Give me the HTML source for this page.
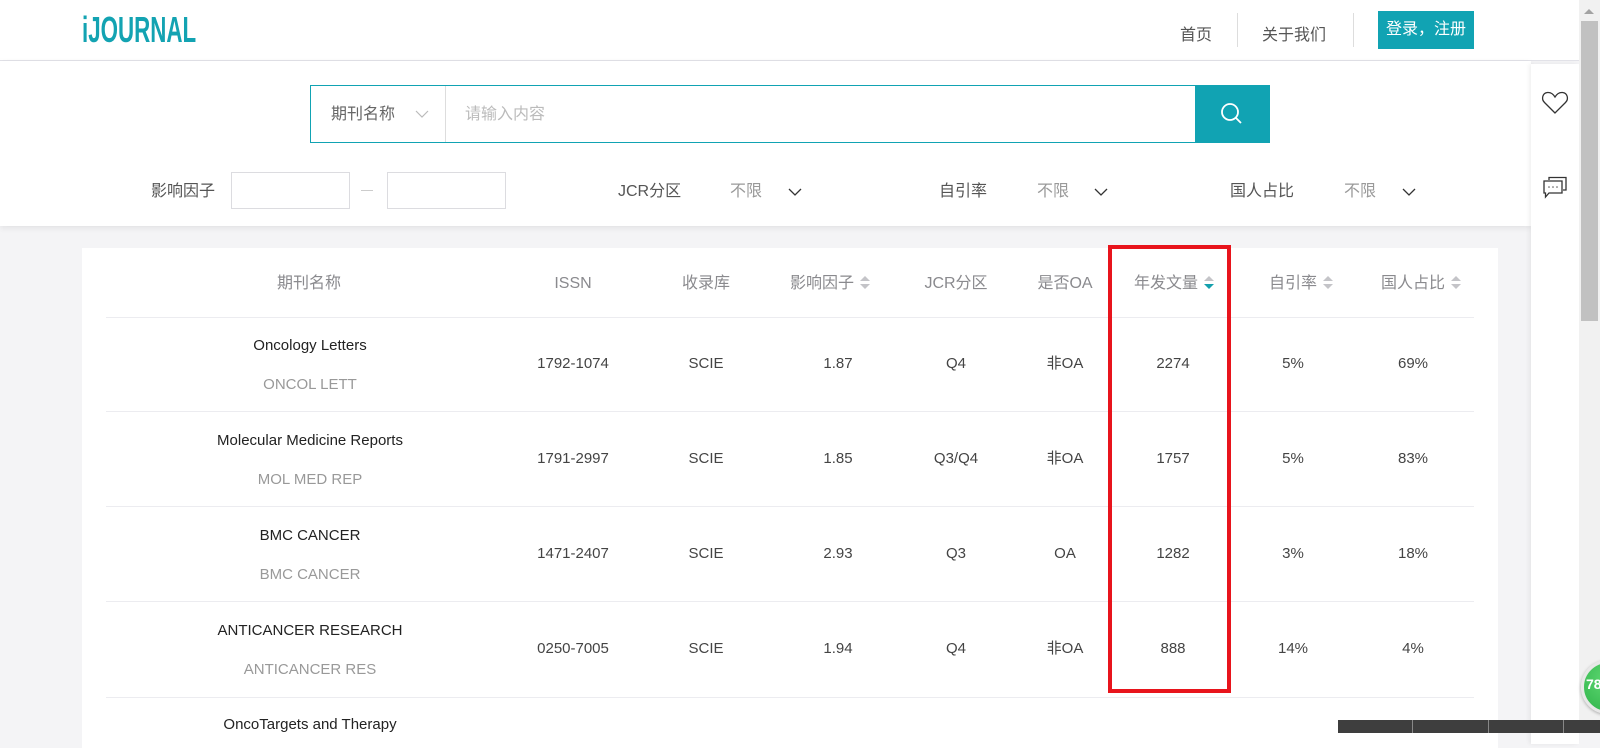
<!DOCTYPE html>
<html><head><meta charset="utf-8">
<style>
*{margin:0;padding:0;box-sizing:border-box}
body{width:1600px;height:733px;overflow:hidden;background:#f4f4f6;font-family:"Liberation Sans","Noto Sans CJK SC",sans-serif;position:relative}
.a{position:absolute;white-space:nowrap}
.c{transform:translateX(-50%)}
.hd{position:absolute;left:0;top:0;width:1579px;height:61px;background:#fff;border-bottom:1px solid #e2e2e8}
.sp{position:absolute;left:0;top:61px;width:1531px;height:165px;background:#fff;box-shadow:0 2px 6px rgba(0,0,0,.08)}
.card{position:absolute;left:82px;top:248px;width:1416px;height:500px;background:#fff}
.th{color:#8a8a8e;font-size:16px;top:274px;line-height:20px}
.td{color:#444;font-size:15px;line-height:18px}
.line{position:absolute;left:106px;width:1368px;height:1px;background:#ececf0}
.arr{display:inline-block;vertical-align:middle;margin-left:6px;width:10px;height:14px;position:relative;top:-1px}
.arr:before{content:"";position:absolute;left:0;top:0;border:5px solid transparent;border-bottom:5px solid #c4c4c8;border-top:0}
.arr:after{content:"";position:absolute;left:0;top:8px;border:5px solid transparent;border-top:5px solid #c4c4c8;border-bottom:0}
.arr.on:after{border-top-color:#14a0ad}
.f{color:#555;font-size:16px;top:182px;line-height:20px}
.g{color:#999;font-size:16px;top:182px;line-height:20px}
</style></head><body>
<div class="hd"></div>
<div class="a" style="left:82px;top:10px;font-size:36px;line-height:40px;color:#13a3b2;font-weight:bold;transform:scaleX(0.62);transform-origin:left">iJOURNAL</div>
<div class="a c" style="left:1196px;top:21px;font-size:16px;color:#555">首页</div>
<div class="a" style="left:1237px;top:13px;width:1px;height:34px;background:#ddd"></div>
<div class="a c" style="left:1294px;top:21px;font-size:16px;color:#555">关于我们</div>
<div class="a" style="left:1353px;top:13px;width:1px;height:34px;background:#ddd"></div>
<div class="a" style="left:1378px;top:11px;width:96px;height:38px;background:#11a3b3;color:#fff;font-size:16px;line-height:38px;text-align:center">登录，注册</div>

<div class="sp"></div>
<div class="a" style="left:310px;top:85px;width:960px;height:58px;border:1px solid #11a3b3;background:#fff"></div>
<div class="a" style="left:331px;top:105px;font-size:16px;line-height:20px;color:#666">期刊名称</div>
<svg class="a" style="left:415px;top:109px" width="14" height="10"><path d="M1 2 L7 8 L13 2" fill="none" stroke="#bbb" stroke-width="1.2"/></svg>
<div class="a" style="left:445px;top:86px;width:1px;height:56px;background:#ddd"></div>
<div class="a" style="left:465px;top:105px;font-size:16px;line-height:20px;color:#bbb">请输入内容</div>
<div class="a" style="left:1195px;top:86px;width:74px;height:56px;background:#11a3b3"></div>
<svg class="a" style="left:1218px;top:100px" width="28" height="28"><circle cx="12" cy="12" r="8" fill="none" stroke="#fff" stroke-width="1.8"/><path d="M18 18 L23 23" stroke="#fff" stroke-width="1.8"/></svg>

<div class="a f" style="left:151px">影响因子</div>
<div class="a" style="left:231px;top:172px;width:119px;height:37px;border:1px solid #dcdce0"></div>
<div class="a" style="left:361px;top:190px;width:12px;height:1px;background:#ccc"></div>
<div class="a" style="left:387px;top:172px;width:119px;height:37px;border:1px solid #dcdce0"></div>
<div class="a f" style="left:618px">JCR分区</div>
<div class="a g" style="left:730px">不限</div>
<svg class="a" style="left:788px;top:187px" width="14" height="10"><path d="M1 2 L7 8 L13 2" fill="none" stroke="#333" stroke-width="1.3"/></svg>
<div class="a f" style="left:939px">自引率</div>
<div class="a g" style="left:1037px">不限</div>
<svg class="a" style="left:1094px;top:187px" width="14" height="10"><path d="M1 2 L7 8 L13 2" fill="none" stroke="#333" stroke-width="1.3"/></svg>
<div class="a f" style="left:1230px">国人占比</div>
<div class="a g" style="left:1344px">不限</div>
<svg class="a" style="left:1402px;top:187px" width="14" height="10"><path d="M1 2 L7 8 L13 2" fill="none" stroke="#333" stroke-width="1.3"/></svg>

<div class="card"></div>
<div class="a c th" style="left:309px">期刊名称</div>
<div class="a c th" style="left:573px">ISSN</div>
<div class="a c th" style="left:706px">收录库</div>
<div class="a c th" style="left:830px">影响因子<span class="arr"></span></div>
<div class="a c th" style="left:956px">JCR分区</div>
<div class="a c th" style="left:1065px">是否OA</div>
<div class="a c th" style="left:1174px">年发文量<span class="arr on"></span></div>
<div class="a c th" style="left:1301px">自引率<span class="arr"></span></div>
<div class="a c th" style="left:1421px">国人占比<span class="arr"></span></div>
<div class="line" style="top:317px"></div>

<div class="a c td" style="left:310px;top:337px;color:#222">Oncology Letters</div>
<div class="a c td" style="left:310px;top:376px;color:#999">ONCOL LETT</div>
<div class="a c td" style="left:573px;top:355px">1792-1074</div><div class="a c td" style="left:706px;top:355px">SCIE</div><div class="a c td" style="left:838px;top:355px">1.87</div><div class="a c td" style="left:956px;top:355px">Q4</div><div class="a c td" style="left:1065px;top:355px">非OA</div><div class="a c td" style="left:1173px;top:355px">2274</div><div class="a c td" style="left:1293px;top:355px">5%</div><div class="a c td" style="left:1413px;top:355px">69%</div>
<div class="line" style="top:411px"></div>

<div class="a c td" style="left:310px;top:432px;color:#222">Molecular Medicine Reports</div>
<div class="a c td" style="left:310px;top:471px;color:#999">MOL MED REP</div>
<div class="a c td" style="left:573px;top:450px">1791-2997</div><div class="a c td" style="left:706px;top:450px">SCIE</div><div class="a c td" style="left:838px;top:450px">1.85</div><div class="a c td" style="left:956px;top:450px">Q3/Q4</div><div class="a c td" style="left:1065px;top:450px">非OA</div><div class="a c td" style="left:1173px;top:450px">1757</div><div class="a c td" style="left:1293px;top:450px">5%</div><div class="a c td" style="left:1413px;top:450px">83%</div>
<div class="line" style="top:506px"></div>

<div class="a c td" style="left:310px;top:527px;color:#222">BMC CANCER</div>
<div class="a c td" style="left:310px;top:566px;color:#999">BMC CANCER</div>
<div class="a c td" style="left:573px;top:545px">1471-2407</div><div class="a c td" style="left:706px;top:545px">SCIE</div><div class="a c td" style="left:838px;top:545px">2.93</div><div class="a c td" style="left:956px;top:545px">Q3</div><div class="a c td" style="left:1065px;top:545px">OA</div><div class="a c td" style="left:1173px;top:545px">1282</div><div class="a c td" style="left:1293px;top:545px">3%</div><div class="a c td" style="left:1413px;top:545px">18%</div>
<div class="line" style="top:601px"></div>

<div class="a c td" style="left:310px;top:622px;color:#222">ANTICANCER RESEARCH</div>
<div class="a c td" style="left:310px;top:661px;color:#999">ANTICANCER RES</div>
<div class="a c td" style="left:573px;top:640px">0250-7005</div><div class="a c td" style="left:706px;top:640px">SCIE</div><div class="a c td" style="left:838px;top:640px">1.94</div><div class="a c td" style="left:956px;top:640px">Q4</div><div class="a c td" style="left:1065px;top:640px">非OA</div><div class="a c td" style="left:1173px;top:640px">888</div><div class="a c td" style="left:1293px;top:640px">14%</div><div class="a c td" style="left:1413px;top:640px">4%</div>
<div class="line" style="top:697px"></div>
<div class="a c td" style="left:310px;top:716px;color:#222">OncoTargets and Therapy</div>

<div class="a" style="left:1108px;top:245px;width:123px;height:448px;border:4px solid #e8141c"></div>

<div class="a" style="left:1531px;top:64px;width:48px;height:680px;background:#fff;box-shadow:-2px 0 4px rgba(0,0,0,.06)"></div>
<svg class="a" style="left:1541px;top:90px" width="28" height="26"><path d="M14 23 L3.5 12.5 C0 9 1.5 3 6.5 2.5 C10 2.2 12.5 4.5 14 7 C15.5 4.5 18 2.2 21.5 2.5 C26.5 3 28 9 24.5 12.5 Z" fill="none" stroke="#333" stroke-width="1.3"/></svg>
<svg class="a" style="left:1542px;top:176px" width="26" height="24"><path d="M7 4 V1.5 H24 V14 H21" fill="none" stroke="#333" stroke-width="1.3"/><path d="M2 5 H20 V17 H7 L3.5 21 V17 H2 Z" fill="none" stroke="#333" stroke-width="1.3"/><circle cx="7" cy="11" r=".8" fill="#555"/><circle cx="11" cy="11" r=".8" fill="#555"/><circle cx="15" cy="11" r=".8" fill="#555"/></svg>

<div class="a" style="left:1579px;top:0;width:21px;height:733px;background:#f1f1f1"></div>
<div class="a" style="left:1581px;top:21px;width:17px;height:300px;background:#c1c1c1"></div>
<div class="a" style="left:1584px;top:9px;border:5px solid transparent;border-bottom:5px solid #a3a3a3;border-top:0;width:0"></div>

<div class="a" style="left:1338px;top:720px;width:262px;height:13px;background:#3e3e3e"></div>
<div class="a" style="left:1412px;top:720px;width:1px;height:13px;background:#888"></div>
<div class="a" style="left:1488px;top:720px;width:1px;height:13px;background:#888"></div>
<div class="a" style="left:1563px;top:720px;width:1px;height:13px;background:#888"></div>
<div class="a" style="left:1581px;top:660px;width:54px;height:54px;border-radius:50%;background:radial-gradient(circle at 50% 35%,#5fd872,#2fb34a);border:3px solid #e8e8e8;box-shadow:0 1px 3px rgba(0,0,0,.3)"></div>
<div class="a" style="left:1586px;top:676px;color:#fff;font-size:14px;font-weight:bold">78</div>
</body></html>
